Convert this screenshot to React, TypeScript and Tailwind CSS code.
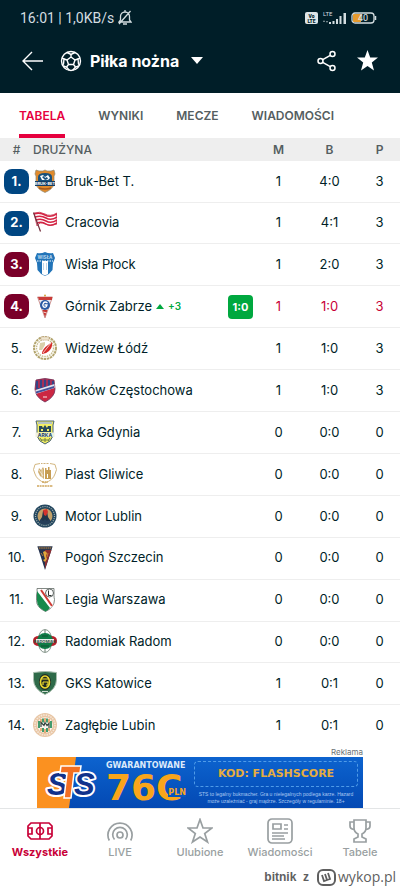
import React from 'react';

type Team = {
    name: string;
    crest: React.ReactNode;
    played: number;
    goals: string;
    points: number;
    zone?: string;
    move?: string;
    live?: string;
};

const ZONE_BLUE = 'bg-[#004682] text-white';
const ZONE_RED = 'bg-[#7a0029] text-white';

const TEAMS: Team[] = [
    {
        name: 'Bruk-Bet T.', played: 1, goals: '4:0', points: 3, zone: ZONE_BLUE,
        crest: (
            <>
                <path d="M3 1l3 1h4l2-1 2 1h4l3-1 1 4-1 2v8q-1 5-9 8.500-8-3.500-9-8.500V7L2 5z" fill="#e08a2c" stroke="#8d8873" strokeWidth=".7" />
                <path d="M5 8q0-4 7-4t7 4v4H5z" fill="#17507c" />
                <path d="M7 7l3-1 2 2 3-2 2 3-2 2H9z" fill="#fff" />
                <path d="M9 8l2-1 1 2 2-1 1 2-3 1z" fill="#17507c" />
                <path d="M2 12h20v5H2z" fill="#123e66" />
                <text x="12" y="16" fontSize="4" fontWeight="700" fill="#fff" textAnchor="middle">BRUK-BET</text>
                <path d="M6 19q6 2 12 0" stroke="#a6591b" strokeWidth="1.500" fill="none" />
            </>
        ),
    },
    {
        name: 'Cracovia', played: 1, goals: '4:1', points: 3, zone: ZONE_BLUE,
        crest: (
            <>
                <path d="M1 2q6-2 11 1t12-1l-1 5 1 6q-7 3-12 0t-8 2z" fill="#fff" stroke="#c8354f" strokeWidth=".8" />
                <path d="M1 3q6-2 11 1t12-1M2 6q6-2 11 1t11-1M3 9q5-2 10 1t11-1M4 12q5-2 9 1t11-1" stroke="#d32343" strokeWidth="1.500" fill="none" />
                <path d="M.5 1.500l7 19" stroke="#75303f" strokeWidth="1.200" />
            </>
        ),
    },
    {
        name: 'Wisła Płock', played: 1, goals: '2:0', points: 3, zone: ZONE_RED,
        crest: (
            <>
                <path d="M4 1q4 1 8-1 4 2 8 1l2 5-2 5-.500 7Q17 22 12 24q-5-2-7.500-6L4 11 2 6z" fill="#2274b8" />
                <path d="M9 9h6v13l-3 1.500L9 22z" fill="#fff" />
                <path d="M4 9h16" stroke="#fff" strokeWidth="1" strokeDasharray="1.500 1" />
                <text x="12" y="6.500" fontSize="4.500" fontWeight="700" fill="#bcd9ee" textAnchor="middle">WISŁA</text>
                <path d="M10.500 11v7M13.500 11v7" stroke="#8eb9da" strokeWidth=".6" />
            </>
        ),
    },
    {
        name: 'Górnik Zabrze', played: 1, goals: '1:0', points: 3, zone: ZONE_RED, move: '+3', live: '1:0',
        crest: (
            <>
                <circle cx="12" cy="1.500" r="1" fill="#d6a739" />
                <path d="M4.500 3h15L12 24z" fill="#e9e9ef" stroke="#b55a55" strokeWidth=".6" />
                <path d="M5 3h14v3H6z" fill="#ca3c38" />
                <circle cx="12" cy="11" r="5" fill="#285aa3" />
                <path d="M14.500 9q-2.500-2-4 0t0 4q3 1 3.500-2h-2.500" stroke="#fff" strokeWidth="1.300" fill="none" />
                <path d="M9.500 16h5L12 23z" fill="#c4312e" />
                <path d="M10.500 18l3 1" stroke="#fff" strokeWidth=".8" />
            </>
        ),
    },
    {
        name: 'Widzew Łódź', played: 1, goals: '1:0', points: 3,
        crest: (
            <>
                <circle cx="12" cy="12" r="11" fill="#fbfaf4" stroke="#b3a56f" strokeWidth="2" strokeDasharray="2.500 .7" />
                <circle cx="12" cy="12" r="8.500" fill="#fff" stroke="#c8bd8f" strokeWidth="1.400" strokeDasharray="1.500 1" />
                <path d="M7 7l5-1v3l-3 5H6z" fill="#d9cfaa" />
                <path d="M9 18Q9 13 15 9l4-3q1 5-3 9-3 3-7 3z" fill="#d52d2b" />
                <path d="M10 17l8-10" stroke="#fff" strokeWidth=".7" />
                <path d="M8 1h8v3H8z" fill="#eee6d0" stroke="#c9aa8d" strokeWidth=".5" />
            </>
        ),
    },
    {
        name: 'Raków Częstochowa', played: 1, goals: '1:0', points: 3,
        crest: (
            <>
                <path d="M3 2q9-3 18 0l1 9q0 8-10 13Q2 19 2 11z" fill="#cb2742" stroke="#6b2c55" strokeWidth=".8" />
                <path d="M3 3q9-3 18 0v4L3 12z" fill="#344487" />
                <path d="M6 2v8M10 1v8M14 1v7M18 2v6" stroke="#a52f57" strokeWidth="2" />
                <path d="M2.500 12L21.500 6v4L2.500 16z" fill="#e0e2ed" />
                <path d="M3 13.500L21 8v2L3 15.500z" fill="#42519a" />
                <path d="M10 19h4" stroke="#f3c7cc" strokeWidth="1.200" />
            </>
        ),
    },
    {
        name: 'Arka Gdynia', played: 0, goals: '0:0', points: 0,
        crest: (
            <>
                <path d="M3 1h18l-1 4v11q-2 6-8 8-6-2-8-8V5z" fill="#f3ef65" stroke="#4a6475" strokeWidth="1" />
                <path d="M5 3h14" stroke="#b7c4c4" strokeWidth="2" />
                <path d="M6 6h3l1 2 2-3 2 3 1-2h3v6H6z" fill="#27485d" />
                <path d="M8 9h2v2H8zM14 9h2v2h-2z" fill="#f3ef65" />
                <path d="M2.500 12.500h19V17h-19z" fill="#eef1df" />
                <text x="12" y="16.500" fontSize="5" fontWeight="700" fill="#21425a" textAnchor="middle">ARKA</text>
                <path d="M7 18l2 3M17 18l-2 3M12 18v4M8 20h8" stroke="#6c7f46" strokeWidth="1" />
            </>
        ),
    },
    {
        name: 'Piast Gliwice', played: 0, goals: '0:0', points: 0,
        crest: (
            <>
                <path d="M7 1.500L2 2.500Q-1 8 2 12q2 6 10 9 8-3 10-9 3-4 0-9.500l-5-1" fill="none" stroke="#d3b781" strokeWidth="1" />
                <path d="M8 1.500h8" stroke="#cfb17b" strokeWidth="1.200" strokeDasharray="1 .5" />
                <path d="M6 6l2 2 2-3 1 2v10l-4-3-2-4z" fill="#d0ae70" />
                <path d="M6 8l4 6M9 7v9" stroke="#fff" strokeWidth=".6" />
                <path d="M12 9V6h1.500v2H15V5h1.500v3H18v9h-6z" fill="#c79d53" />
                <path d="M14.500 12v4" stroke="#fff" strokeWidth="1" />
                <path d="M9 20h6M4 24h16" stroke="#cfa75e" strokeWidth="1.300" strokeDasharray="2 .6" />
            </>
        ),
    },
    {
        name: 'Motor Lublin', played: 0, goals: '0:0', points: 0,
        crest: (
            <>
                <circle cx="12" cy="12" r="11.500" fill="#24475f" />
                <circle cx="12" cy="12" r="9.500" fill="none" stroke="#aab6b4" strokeWidth="1.200" strokeDasharray="1 1.200" />
                <circle cx="12" cy="12" r="7.500" fill="#c3a169" />
                <path d="M10 7h4l1 6 3 5H6l3-5z" fill="#1f3549" />
                <path d="M10 6l4-1 1 3-2 4-2-1z" fill="#d5332c" />
                <path d="M6 18l2-3 2 2 2-2 2 2 2-2 2 3-3 2H9z" fill="#243e59" />
            </>
        ),
    },
    {
        name: 'Pogoń Szczecin', played: 0, goals: '0:0', points: 0,
        crest: (
            <>
                <path d="M4.500.500h15L12 24z" fill="#24324f" />
                <path d="M12 4h6.500L12 23z" fill="#8e2e31" />
                <path d="M4.500.500h15l-1 3h-13z" fill="#394050" />
                <path d="M6 2h12" stroke="#b9823a" strokeWidth="1.200" strokeDasharray="1.500 .7" />
                <path d="M10 6l2-1 2 2-1 3 1 3-2 3-2-2 2-1-1-3z" fill="#e2a83b" />
                <path d="M8 7l2 3M15 7l-1 4" stroke="#d08b36" strokeWidth=".8" />
            </>
        ),
    },
    {
        name: 'Legia Warszawa', played: 0, goals: '0:0', points: 0,
        crest: (
            <>
                <path d="M4 .500h17v7q0 2 .500 4 0 8-9 12-9-4-9-11V7q1-3 .500-6.500z" fill="#fff" stroke="#626b66" strokeWidth=".8" />
                <path d="M4 3l13 17q-2 2-4.500 3.500-8.500-4-8.500-11z" fill="#168a4b" />
                <path d="M5 2h3l12 15-2 3z" fill="#fff" />
                <path d="M8 2l11 16" stroke="#cf3b35" strokeWidth="2" />
                <circle cx="16.500" cy="5" r="4" fill="#fff" stroke="#3d4542" strokeWidth=".8" />
                <path d="M15.500 2.500v5h3" stroke="#2e3532" strokeWidth="1" fill="none" />
            </>
        ),
    },
    {
        name: 'Radomiak Radom', played: 0, goals: '0:0', points: 0,
        crest: (
            <>
                <ellipse cx="12" cy="12" rx="7" ry="11.500" fill="#fff" stroke="#667a6d" strokeWidth=".8" />
                <path d="M12 1v5M12 18v5" stroke="#667a6d" strokeWidth="1" />
                <path d="M6 7Q0 7 0 12t6 5h12q6 0 6-5t-6-5z" fill="#b7202b" />
                <circle cx="12" cy="12" r="8" fill="#0e7c46" />
                <path d="M3 10h18v4H3z" fill="#e8eeeb" />
                <text x="12" y="13.500" fontSize="4" fontWeight="700" fill="#2d4a3d" textAnchor="middle">RADOMIAK</text>
                <path d="M9 7h6M8 17h8" stroke="#114e33" strokeWidth="1.200" />
            </>
        ),
    },
    {
        name: 'GKS Katowice', played: 1, goals: '0:1', points: 0,
        crest: (
            <>
                <path d="M.500 1.500q12-2 23 0v7q0 10-11.500 15Q.500 18 .500 8.500z" fill="#2e6a49" stroke="#a8bdae" strokeWidth="1" />
                <ellipse cx="12" cy="11" rx="6" ry="8" fill="#222b22" />
                <ellipse cx="12" cy="11" rx="4.500" ry="6" fill="none" stroke="#ead92f" strokeWidth="1.600" />
                <path d="M9 8h6M10 11h5v3h-2M10 11v3" stroke="#ead92f" strokeWidth="1.200" fill="none" />
                <path d="M9 20.500h6" stroke="#cfdcd2" strokeWidth="1" />
            </>
        ),
    },
    {
        name: 'Zagłębie Lubin', played: 1, goals: '0:1', points: 0,
        crest: (
            <>
                <circle cx="12" cy="12" r="12" fill="#e8c6a5" />
                <circle cx="12" cy="12" r="10" fill="none" stroke="#f6e7d8" strokeWidth="1.600" strokeDasharray="1.500 1" />
                <circle cx="12" cy="12" r="7.800" fill="#fbf5ee" />
                <path d="M6 8v7M18 8v7M10 5.500v4M14 5.500v4M10 15v4M14 15v4" stroke="#2f9260" strokeWidth="1.800" />
                <path d="M8 6v4M16 6v4M8 15v3M16 15v3M12 5v4M12 16v4" stroke="#dd8a43" strokeWidth="1.300" />
                <path d="M8 14V9.500l3 3 1-3 2 3 2-2V15" stroke="#34453e" strokeWidth="1.200" fill="none" />
            </>
        ),
    },
];

const TABS = ['TABELA', 'WYNIKI', 'MECZE', 'WIADOMOŚCI'];

const NAV = [
    {
        label: 'Wszystkie',
        icon: (
            <>
                <path d="M4 5h18l3 3v10l-3 3H4l-3-3V8z" />
                <path d="M13 5v16M1 10h4v6H1M25 10h-4v6h4" />
                <circle cx="13" cy="13" r="3.500" />
            </>
        ),
    },
    {
        label: 'LIVE',
        icon: (
            <>
                <circle cx="13" cy="17" r="3" />
                <path d="M7.500 21.500a7.300 7.300 0 1 1 11 0" />
                <path d="M2.300 22.500a12 12 0 1 1 21.400 0" />
            </>
        ),
    },
    {
        label: 'Ulubione',
        icon: <path d="M13 1.500l3 8.500h9l-7.300 5.500L20.500 24 13 19l-7.500 5 2.800-8.500L1 10h9z" />,
    },
    {
        label: 'Wiadomości',
        icon: (
            <>
                <rect x="1" y="1" width="24" height="24" rx="4" />
                <path d="M6 6h8v5H6zM17 7h4M17 11h4M5 15h16M5 18h12M5 21h13" />
            </>
        ),
    },
    {
        label: 'Tabele',
        icon: (
            <>
                <path d="M7 2h12v8q0 4-4 6v3l4 2v3H7v-3l4-2v-3q-4-2-4-6z" />
                <path d="M7 4H3v4q0 3 4 3.500M19 4h4v4q0 3-4 3.500" />
            </>
        ),
    },
];

const StatusBar = () => (
    <div className="flex h-9 items-center justify-between pl-5 pr-[23px] font-[Roboto,sans-serif] text-sm text-[#d3dde0]">
        <div className="flex items-center gap-1">
            <span>16:01 | 1,0KB/s</span>
            <svg width="14" height="16" viewBox="0 0 14 16" fill="none" stroke="currentColor" strokeWidth="1.300">
                <path d="M1 12h12l-1.500-2V6.500a4.500 4.500 0 0 0-9 0V10zM5 14h4M7 0v2M1 14L12.500 1" />
            </svg>
        </div>
        <div className="flex items-center gap-1">
            <svg width="13" height="12" viewBox="0 0 13 12">
                <rect width="13" height="12" rx="2" fill="#dde5e8" />
                <text x="6.500" y="5.500" fontSize="5" fontWeight="900" fill="#001e28" textAnchor="middle">Vo</text>
                <text x="6.500" y="10.500" fontSize="5" fontWeight="900" fill="#001e28" textAnchor="middle">LTE</text>
            </svg>
            <svg width="25" height="14" viewBox="0 0 25 14" fill="currentColor">
                <text x="1" y="5" fontSize="6">LTE</text>
                <path d="M1 11l1-2 1 2zM4 10h2l-1 2z" opacity=".7" />
                <path d="M7 11h2v2H7zM10.500 10h2v3h-2zM14 8h2v5h-2zM17.500 5h2v8h-2zM21.500 2h2.500v11h-2.500z" />
            </svg>
            <svg width="26" height="12" viewBox="0 0 26 12">
                <rect x="2" y="2" width="8" height="8" fill="#e59a2c" />
                <rect x="1" y="1" width="22" height="10" rx="3" fill="none" stroke="#d3dde0" strokeWidth="1.300" />
                <path d="M24.500 4v4" stroke="#d3dde0" strokeWidth="1.500" />
                <text x="12" y="9" fontSize="9" fill="#e8eef0" textAnchor="middle">40</text>
            </svg>
        </div>
    </div>
);

const Header = () => (
    <header className="bg-[#001e28]">
        <StatusBar />
        <div className="flex h-[57px] items-center pb-2 pl-[22px] pr-[22px] text-white">
            <button type="button" aria-label="Wstecz">
                <svg width="22" height="20" viewBox="0 0 22 20" fill="none" stroke="currentColor" strokeWidth="1.400">
                    <path d="M21 10H1.500M10 1L1 10l9 9" />
                </svg>
            </button>
            <button type="button" className="ml-4 flex items-center gap-2">
                <svg width="22" height="22" viewBox="0 0 22 22" fill="none" stroke="currentColor" strokeWidth="1.400">
                    <circle cx="11" cy="11" r="9.500" />
                    <path d="M11 7l4 3-1.500 4.500h-5L7 10zM11 7V4.500M15 10l3-1M13.500 14.500l2 2.500M8.500 14.500l-2 2.500M7 10L4 9" />
                    <path d="M7 2.500l4 2 4-2M20 8l-2 1 .500 5 1 1M12.500 20.500l3-3.500 3-1M9.500 20.500L6.500 17l-3-1M2 8l2 1-.500 5-1 1" />
                </svg>
                <span className="text-base font-bold">Piłka nożna</span>
                <svg width="12" height="7" viewBox="0 0 12 7" fill="currentColor" className="ml-1"><path d="M0 0h12L6 7z" /></svg>
            </button>
            <button type="button" aria-label="Udostępnij" className="ml-auto">
                <svg width="20" height="22" viewBox="0 0 20 22" fill="none" stroke="currentColor" strokeWidth="1.500">
                    <circle cx="15.500" cy="4" r="2.500" />
                    <circle cx="3.500" cy="11" r="2.500" />
                    <circle cx="15.500" cy="18" r="2.500" />
                    <path d="M13.300 5.300L5.700 9.700M5.700 12.300l7.600 4.400" />
                </svg>
            </button>
            <button type="button" aria-label="Ulubione" className="ml-5">
                <svg width="21" height="21" viewBox="0 0 21 21" fill="currentColor">
                    <path d="M10.500 0l2.700 7.500H21l-6.200 5L17 20.500l-6.500-4.600L4 20.500l2.200-8L0 7.500h7.800z" />
                </svg>
            </button>
        </div>
    </header>
);

const Standings = () => (
    <table className="h-[608px] w-full table-fixed border-collapse text-[#001e28]">
        <thead>
            <tr className="h-[23px] bg-[#eeeeee] text-xs text-[#555e61]">
                <th className="w-[33px] p-0 font-medium">#</th>
                <th className="p-0 text-left font-medium">DRUŻYNA</th>
                <th className="w-[51px] p-0 font-semibold">M</th>
                <th className="w-[51px] p-0 font-semibold">B</th>
                <th className="w-[45px] p-0 pl-1 font-semibold">P</th>
            </tr>
        </thead>
        <tbody>
            {TEAMS.map((team, i) => (
                <tr key={team.name} className={`border-b border-[#eeeeee] text-[13px] last:border-0 ${team.live ? 'text-[#c80037]' : ''}`}>
                    <td className="p-0">
                        <span className={`mx-auto flex h-[25px] items-center justify-center rounded-lg ${team.zone ? `w-[25px] font-bold ${team.zone}` : 'text-[#001e28]'}`}>
                            {i + 1}.
                        </span>
                    </td>
                    <td className="p-0">
                        <div className="flex items-center gap-2 text-[#001e28]">
                            <svg width="24" height="25" viewBox="0 0 24 25" className="shrink-0">{team.crest}</svg>
                            <span className="whitespace-nowrap">{team.name}</span>
                            {team.move && (
                                <span className="-ml-1 flex items-center gap-1 text-[10px] font-semibold text-[#00a83f]">
                                    <svg width="8" height="5" viewBox="0 0 8 5" fill="currentColor"><path d="M4 0l4 5H0z" /></svg>
                                    {team.move}
                                </span>
                            )}
                            {team.live && (
                                <span className="ml-auto flex h-6 w-[25px] items-center justify-center rounded bg-[#00a83f] text-[11px] font-bold text-white">{team.live}</span>
                            )}
                        </div>
                    </td>
                    <td className="p-0 text-center">{team.played}</td>
                    <td className="p-0 text-center">{team.goals}</td>
                    <td className="p-0 pl-1 text-center">{team.points}</td>
                </tr>
            ))}
        </tbody>
    </table>
);

const Banner = () => (
    <aside className="mx-auto mt-px w-[326px]">
        <p className="text-right text-[8px] leading-[10px] text-[#6b7275]">Reklama</p>
        <a href="#sts" className="flex h-[51px] overflow-hidden bg-linear-to-b from-[#0d63cf] to-[#0449b3]">
            <svg width="66" height="51" viewBox="0 0 66 51" className="shrink-0">
                <path d="M0 0h39l-7 51H0z" fill="#fb9120" />
                <g fontFamily="Liberation Sans, sans-serif" fontWeight="700" fontStyle="italic" paintOrder="stroke" strokeLinejoin="round">
                    <text x="10" y="38" fontSize="31" fill="#10328b" stroke="#fff" strokeWidth="4">S</text>
                    <text x="37" y="38" fontSize="31" fill="#10328b" stroke="#fff" strokeWidth="4">S</text>
                </g>
                <path d="M24 9h20l-1 7h-6l-3 25h-7l3-25h-7z" fill="#f36f21" stroke="#fff" strokeWidth="1.500" />
            </svg>
            <div className="w-[86px] shrink-0 pl-[3px] font-['DejaVu_Sans',sans-serif] font-bold">
                <div className="pt-1 text-[8px] leading-[10px] text-[#dbe9fa]">GWARANTOWANE</div>
                <div className="relative w-[80px] text-[36px] leading-[34px] text-[#f9a51b]">
                    76C
                    <span className="absolute bottom-2 right-0 bg-[#0856c0] text-[8px] leading-[8px]">PLN</span>
                </div>
            </div>
            <div className="min-w-0 flex-1 px-[5px] pt-1 text-center">
                <div className="rounded-sm border border-dashed border-[#4f9be8] font-['DejaVu_Sans',sans-serif] text-[11px] leading-[24px] font-bold text-[#e5ad3f]">KOD: FLASHSCORE</div>
                <p className="pt-1 font-['Liberation_Sans',sans-serif] text-[5px] leading-[7px] text-[#a9c9f2]">
                    STS to legalny bukmacher. Gra u nielegalnych podlega karze. Hazard
                    <br />
                    może uzależniać - graj mądrze. Szczegóły w regulaminie. 18+
                </p>
            </div>
        </a>
    </aside>
);

export default function App() {
    return (
        <div className="bg-white font-[Inter,sans-serif]">
            <Header />
            <nav className="flex h-[45px] gap-[33px] pl-[19px] text-xs font-semibold text-[#555e61]">
                {TABS.map((tab, i) => (
                    <a
                        key={tab}
                        href={`#${tab.toLowerCase()}`}
                        className={`flex items-center border-b-4 pt-1 ${i === 0 ? 'border-[#e6003e] text-[#e6003e]' : 'border-transparent'}`}
                    >
                        {tab}
                    </a>
                ))}
            </nav>
            <Standings />
            <Banner />
            <nav className="grid grid-cols-5 border-t border-[#e3e5e6] pt-[9px] text-[11px] font-medium text-[#999fa1]">
                {NAV.map((item, i) => (
                    <a key={item.label} href={`#${item.label.toLowerCase()}`} className={`flex flex-col items-center ${i === 0 ? 'font-bold text-[#c80037]' : ''}`}>
                        <svg width="26" height="26" viewBox="0 0 26 26" fill="none" stroke="currentColor" strokeWidth="1.700">{item.icon}</svg>
                        <span className="leading-4">{item.label}</span>
                    </a>
                ))}
            </nav>
            <footer className="flex h-[26px] items-center justify-end gap-2 pr-1 pt-2 text-[#5f5f5f]">
                <span className="font-['Liberation_Sans',sans-serif] text-xs font-bold">bitnik&nbsp; z</span>
                <span className="flex items-center gap-0.5 font-['Open_Sans',sans-serif] text-[14px] leading-[18px]">
                    <svg width="19" height="17" viewBox="0 0 19 17" fill="none" stroke="currentColor">
                        <rect x="1" y="1" width="17" height="15" rx="5" strokeWidth="2" />
                        <path d="M5 6l2 6 3-1-2-6M10 11l3-1-2-6" strokeWidth="1.800" />
                    </svg>
                    wykop.pl
                </span>
            </footer>
        </div>
    );
}
